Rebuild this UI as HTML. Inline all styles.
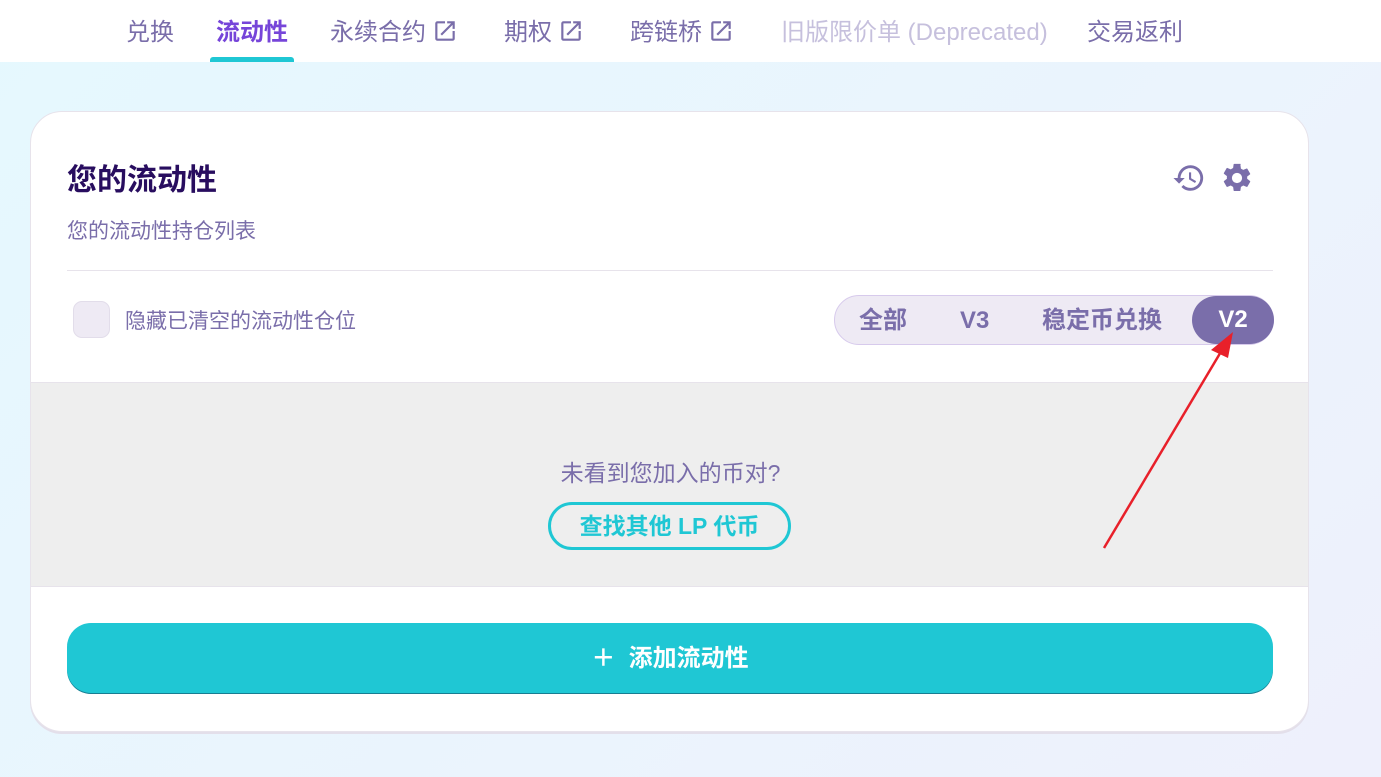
<!DOCTYPE html>
<html><head><meta charset="utf-8"><style>
*{margin:0;padding:0;box-sizing:border-box}
body{width:1381px;height:777px;overflow:hidden;font-family:"Liberation Sans","Noto Sans CJK SC",sans-serif;background:linear-gradient(135deg,#e5f8fe 0%,#ebf4fd 60%,#eef0fc 100%);position:relative}
.nav{position:absolute;left:0;top:0;width:1381px;height:62px;background:#fff}
.nav span{position:absolute;top:16px;font-size:24px;color:#7a6eaa;line-height:34px;white-space:nowrap}
.ext{display:inline-block;width:26px;height:26px;vertical-align:-4px;margin-left:6px}
.ul{position:absolute;left:210px;top:57px;width:84px;height:5px;background:#1fc7d4;border-radius:3px 3px 0 0}
.card{position:absolute;left:30px;top:111px;width:1279px;height:621px;background:#fff;border:1px solid #e7e3eb;border-radius:32px;box-shadow:0 2px 0 #e3dfea;overflow:hidden}
.t{position:absolute;left:36px;top:49px;font-size:30px;font-weight:bold;color:#280d5f;line-height:40px}
.st{position:absolute;left:36px;top:105px;font-size:21px;color:#7a6eaa;line-height:30px}
.hr{position:absolute;left:36px;top:158px;width:1206px;height:1px;background:#e7e3eb}
.cb{position:absolute;left:42px;top:189px;width:37px;height:37px;border-radius:9px;background:#eeeaf4;border:1px solid #e2ddea}
.cbl{position:absolute;left:94px;top:195px;font-size:21px;color:#7a6eaa;line-height:30px}
.tog{position:absolute;left:803px;top:183px;width:440px;height:50px;border-radius:25px;background:#eeeaf4;border:1px solid #d7caec}
.tog span{position:absolute;top:1px;line-height:48px;font-size:24px;font-weight:bold;color:#7a6eaa}
.v2{position:absolute;left:357px;width:82px;height:48px;border-radius:24px;background:#7a6eaa;color:#fff!important;text-align:center;top:0!important}
.grey{position:absolute;left:0;top:270px;width:1279px;height:205px;background:#eeeeee;border-top:1px solid #e7e3eb;border-bottom:1px solid #e7e3eb}
.q{position:absolute;left:0;width:100%;text-align:center;top:74px;font-size:23px;color:#7a6eaa;line-height:32px}
.lp{position:absolute;left:517px;top:119px;width:243px;height:48px;border:3px solid #1fc7d4;border-radius:24px;color:#1fc7d4;font-size:23px;font-weight:bold;text-align:center;line-height:42px}
.btn{position:absolute;left:36px;top:511px;width:1206px;height:71px;border-radius:24px;background:#1fc7d4;box-shadow:0 -1px 0 rgba(14,14,44,.4) inset;color:#fff;font-size:24px;font-weight:bold;text-align:center;line-height:71px}
</style></head><body>
<div class="nav">
<span style="left:126px">兑换</span>
<span style="left:216px;color:#7645d9;font-weight:bold">流动性</span>
<span style="left:330px">永续合约<svg class="ext" viewBox="0 0 24 24"><path d="M19 19H5V5h7V3H5a2 2 0 0 0-2 2v14a2 2 0 0 0 2 2h14a2 2 0 0 0 2-2v-7h-2v7zM14 3v2h3.6l-9.8 9.8 1.4 1.4L19 6.4V10h2V3h-7z" fill="#7a6eaa"/></svg></span>
<span style="left:504px">期权<svg class="ext" viewBox="0 0 24 24"><path d="M19 19H5V5h7V3H5a2 2 0 0 0-2 2v14a2 2 0 0 0 2 2h14a2 2 0 0 0 2-2v-7h-2v7zM14 3v2h3.6l-9.8 9.8 1.4 1.4L19 6.4V10h2V3h-7z" fill="#7a6eaa"/></svg></span>
<span style="left:630px">跨链桥<svg class="ext" viewBox="0 0 24 24"><path d="M19 19H5V5h7V3H5a2 2 0 0 0-2 2v14a2 2 0 0 0 2 2h14a2 2 0 0 0 2-2v-7h-2v7zM14 3v2h3.6l-9.8 9.8 1.4 1.4L19 6.4V10h2V3h-7z" fill="#7a6eaa"/></svg></span>
<span style="left:781px;color:#c6c0dd">旧版限价单 (Deprecated)</span>
<span style="left:1087px">交易返利</span>
<div class="ul"></div>
</div>
<div class="card">
<div class="t">您的流动性</div>
<div class="st">您的流动性持仓列表</div>
<svg style="position:absolute;left:1141px;top:49px" width="34" height="34" viewBox="0 0 24 24"><path d="M13 3a9 9 0 0 0-9 9H1l3.9 3.9.1.1L9 12H6a7 7 0 1 1 2.05 4.95l-1.42 1.42A9 9 0 1 0 13 3zm-1 5v5l4.25 2.52.77-1.28-3.52-2.09V8H12z" fill="#7a6eaa"/></svg>
<svg style="position:absolute;left:1189px;top:49px" width="34" height="34" viewBox="0 0 24 24"><path d="M19.14 12.94a7.1 7.1 0 0 0 0-1.88l2.03-1.58a.5.5 0 0 0 .12-.61l-1.92-3.32a.5.5 0 0 0-.59-.22l-2.39.96a7 7 0 0 0-1.62-.94l-.36-2.54A.48.48 0 0 0 13.93 2h-3.84a.48.48 0 0 0-.48.41l-.36 2.54a7.4 7.4 0 0 0-1.62.94l-2.39-.96a.5.5 0 0 0-.59.22L2.74 8.47a.48.48 0 0 0 .12.61l2.03 1.58a7.3 7.3 0 0 0 0 1.88l-2.03 1.58a.5.5 0 0 0-.12.61l1.92 3.32c.12.22.37.29.59.22l2.39-.96c.5.38 1.03.7 1.62.94l.36 2.54c.05.24.24.41.48.41h3.84c.24 0 .44-.17.47-.41l.36-2.54a7 7 0 0 0 1.62-.94l2.39.96c.22.08.47 0 .59-.22l1.92-3.32a.48.48 0 0 0-.12-.61l-2.01-1.58zM12 15.6A3.6 3.6 0 1 1 12 8.4a3.6 3.6 0 0 1 0 7.2z" fill="#7a6eaa"/></svg>
<div class="hr"></div>
<div class="cb"></div>
<div class="cbl">隐藏已清空的流动性仓位</div>
<div class="tog">
<span style="left:24px">全部</span>
<span style="left:125px">V3</span>
<span style="left:207px">稳定币兑换</span>
<span class="v2">V2</span>
</div>
<div class="grey">
<div class="q">未看到您加入的币对?</div>
<div class="lp">查找其他 LP 代币</div>
</div>
<div class="btn">＋&nbsp; 添加流动性</div>
</div>
<svg style="position:absolute;left:0;top:0" width="1381" height="777"><line x1="1104" y1="548" x2="1222" y2="350" stroke="#e8202a" stroke-width="2.5"/><polygon points="1233,332 1211,350 1228,358" fill="#e8202a"/></svg>
</body></html>
